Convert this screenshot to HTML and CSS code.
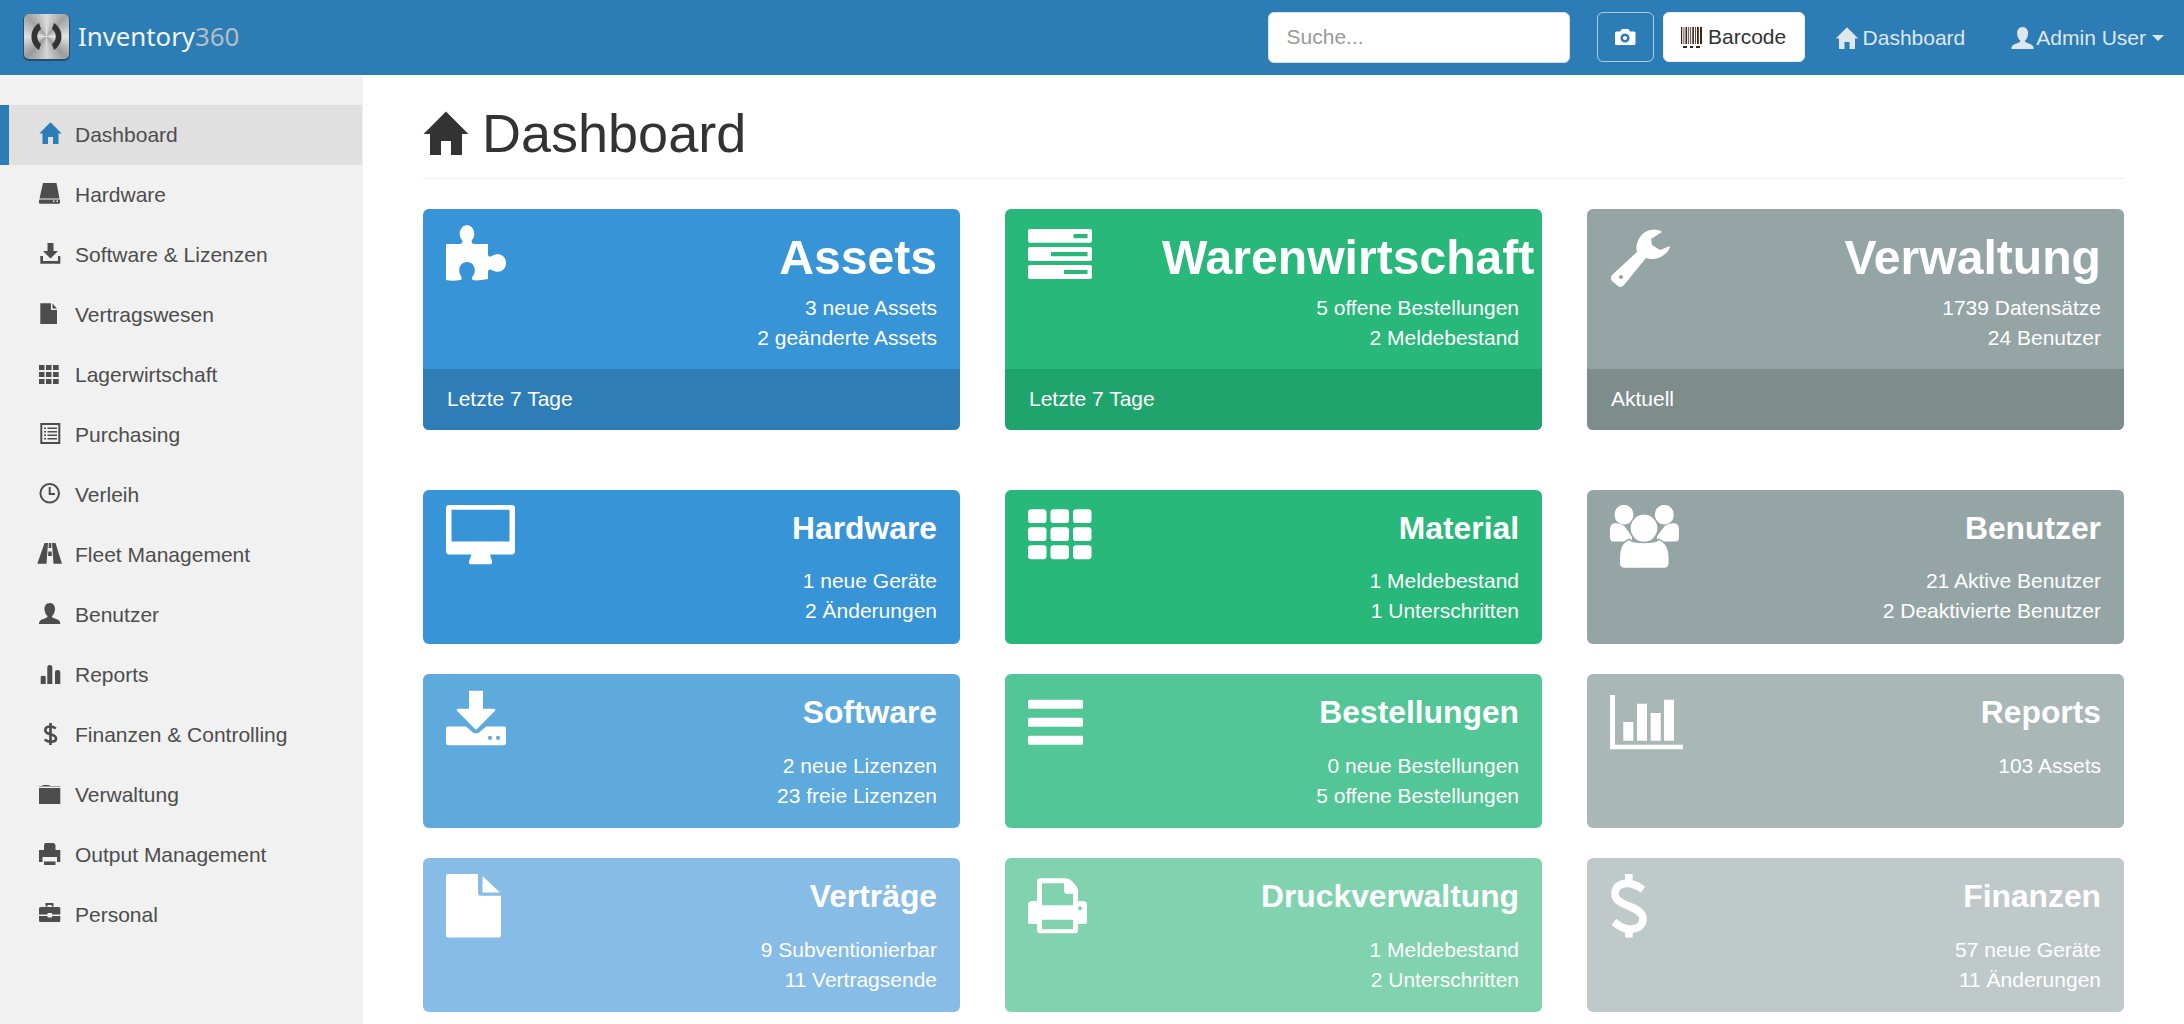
FILE: index.html
```html
<!DOCTYPE html>
<html lang="de">
<head>
<meta charset="utf-8">
<title>Inventory360 Dashboard</title>
<link rel="stylesheet" href="styles.css">
</head>
<body>
<header class="navbar">
  <a class="brand">
    <span class="logo"><svg viewBox="0 0 45 45" width="45" height="45"><path fill="#333" d="M15 9C5 15 5 30 15 36L17 30C12 27 12 18 17 15ZM30 9C40 15 40 30 30 36L28 30C33 27 33 18 28 15Z"/></svg></span>
    <span class="brand-text">Inventory<span class="brand-num">360</span></span>
  </a>
  <div class="nav-right">
    <input class="search" type="text" placeholder="Suche...">
    <button class="btn btn-cam"><svg viewBox="0 0 22 18" width="22" height="18"><path fill="#fff" fill-rule="evenodd" d="M1 5Q1 3.500 2.500 3.500H6L8 1H14.500L16 3.500H20Q21.500 3.500 21.500 5V15.500Q21.500 17 20 17H2.500Q1 17 1 15.500ZM11 5.500a4.500 4.500 0 1 0 .01 0ZM11 8a2 2 0 1 1-.01 0Z"/></svg></button>
    <button class="btn btn-bar"><svg viewBox="0 0 21 21" width="21" height="21"><path fill="#3a2418" d="M0 0h1.200v17H0zM2.500 0h.8v17h-.8zM4.500 0h1.600v17H4.500zM7.300 0h.8v17h-.8zM9.300 0h.8v17h-.8zM11.300 0h1.600v17h-1.600zM14 0h.8v17H14zM16 0h1.800v17H16zM19 0h2v17h-2zM2 19h4v2H2zM9 19h3v2H9zM15 19h4v2h-4z"/></svg><span>Barcode</span></button>
    <a class="nav-link nav-home"><svg viewBox="1 0 23 22" width="24" height="22"><path fill="currentColor" d="M12.500 .3L23.700 11.500H20.500V22H15V15H10V22H4.500V11.500H1.300Z"/></svg><span>Dashboard</span></a>
    <a class="nav-link nav-user"><svg viewBox="1 1 21.300 21" width="23" height="22"><path fill="currentColor" d="M11.700 1C15.500 1 17 4 17 7C17 10 15.500 13 14 14C14 15.500 15 16 17 16.500C20 17.500 22.300 18.500 22.300 22H1C1 18.500 3.500 17.500 6.500 16.500C8.500 16 9.500 15.500 9.500 14C8 13 6.500 10 6.500 7C6.500 4 8 1 11.700 1Z"/></svg><span>Admin User</span><i class="caret"></i></a>
  </div>
</header>
<div class="layout">
  <nav class="sidebar">
    <ul class="side-list">
      <li class="side-item active"><svg class="si" viewBox="0 0 26 26"><path d="M12.500 .3L23.700 11.500H20.500V22H15V15H10V22H4.500V11.500H1.300Z"/></svg>Dashboard</li>
      <li class="side-item"><svg class="si" viewBox="0 0 26 26"><path fill-rule="evenodd" d="M5 1H18.500L21.500 16.500H1.500ZM2 17.500H21.500Q22 17.500 22 18.500V20.700Q22 21.700 21 21.700H2Q1 21.700 1 20.700V18.500Q1 17.500 2 17.500ZM15 18.500v1.500h1.500v-1.500ZM18.500 18.500v1.500h1.500v-1.500Z"/></svg>Hardware</li>
      <li class="side-item"><svg class="si" viewBox="0 0 26 26"><path d="M9.500 1H15.500V9H20L12.500 16.500L5 9H9.500ZM2.300 14H5V19H20V14H22.300V21.700H2.300Z"/></svg>Software &amp; Lizenzen</li>
      <li class="side-item"><svg class="si" viewBox="0 0 26 26"><path d="M2.300 1.300H13V8H19V22H2.300ZM14.500 1.500L19 6.500H14.500Z"/></svg>Vertragswesen</li>
      <li class="side-item"><svg class="si" viewBox="0 0 26 26"><path d="M1 3h5.500v5H1zM8 3h5.500v5H8zM15 3h5.700v5H15zM1 10h5.500v5H1zM8 10h5.500v5H8zM15 10h5.700v5H15zM1 17h5.500v5H1zM8 17h5.500v5H8zM15 17h5.700v5H15z"/></svg>Lagerwirtschaft</li>
      <li class="side-item"><svg class="si" viewBox="0 0 26 26"><path fill-rule="evenodd" d="M2.300 1H22.300V22H2.300ZM4.300 3V20H20.300V3ZM6 5.500h2v1.500H6zM9.500 5.500H19v1.500H9.500zM6 9h2v1.500H6zM9.500 9H19v1.500H9.500zM6 12.500h2V14H6zM9.500 12.500H19V14H9.500zM6 16h2v1.500H6zM9.500 16H19v1.500H9.500z"/></svg>Purchasing</li>
      <li class="side-item"><svg class="si" viewBox="0 0 26 26"><circle cx="11.700" cy="11.300" r="9.300" fill="none" stroke="currentColor" stroke-width="2"/><path d="M11.700 5V12H17" fill="none" stroke="currentColor" stroke-width="2"/></svg>Verleih</li>
      <li class="side-item"><svg class="si" viewBox="0 0 26 26"><path d="M6.500 1H10L8.500 21.700H-.7ZM14 1H17.500L24 21.700H15.500ZM10.800 1H13.200L13.400 6H10.600ZM10.400 9.500H13.600L14 14H10Z"/></svg>Fleet Management</li>
      <li class="side-item"><svg class="si" viewBox="0 0 26 26"><path d="M11.700 1C15.500 1 17 4 17 7C17 10 15.500 13 14 14C14 15.500 15 16 17 16.500C20 17.500 22.300 18.500 22.300 22H1C1 18.500 3.500 17.500 6.500 16.500C8.500 16 9.500 15.500 9.500 14C8 13 6.500 10 6.500 7C6.500 4 8 1 11.700 1Z"/></svg>Benutzer</li>
      <li class="side-item"><svg class="si" viewBox="0 0 26 26"><path d="M2.700 15Q2.700 13.700 5.200 13.700Q7.700 13.700 7.700 15V22H2.700ZM9.300 5Q9.300 3 11.800 3Q14.300 3 14.300 5V22H9.300ZM17 10Q17 8 19.600 8Q22.300 8 22.300 10V22H17Z"/></svg>Reports</li>
      <li class="side-item"><svg class="si" viewBox="0 0 26 26"><path fill="none" stroke="currentColor" stroke-width="2.700" d="M17.800 6.500C16 5.200 14.500 4.500 12.500 4.500C9 4.500 7.300 6.200 7.300 8.200C7.300 10.700 9.500 11.500 12.500 12.300C15.800 13.200 18 14 18 16.500C18 18.800 15.800 19.800 12.800 19.800C10.500 19.800 8.500 19 6.700 17.500M12.500 1V23"/></svg>Finanzen &amp; Controlling</li>
      <li class="side-item"><svg class="si" viewBox="0 0 26 26"><path d="M1 6H22.300V22H1ZM1 4.500V4H4L5 3H11L12 4H22.300V4.500Z"/></svg>Verwaltung</li>
      <li class="side-item"><svg class="si" viewBox="0 0 26 26"><path d="M7 1H16L17.500 3V8H22.300V20H19V15H4.500V20H1V8H6V3ZM6 19.500H17.500V23H6Z"/></svg>Output Management</li>
      <li class="side-item"><svg class="si" viewBox="0 0 26 26"><path d="M7.500 1H15.500V4.500H13.500V3H9.500V4.500H7.500ZM2.500 5H21Q22.300 5 22.300 6.500V12.500H14V11H9.500V12.500H1V6.500Q1 5 2.500 5ZM1 14H9.500V15.500H14V14H22.300V18.500Q22.300 20 21 20H2.500Q1 20 1 18.500Z"/></svg>Personal</li>
    </ul>
  </nav>
  <main class="content">
    <div class="page-head">
      <svg class="head-icon" viewBox="1 0 23 22"><path d="M12.500 .3L23.700 11.500H20.500V22H15V15H10V22H4.500V11.500H1.300Z"/></svg>
      <h1 class="page-title">Dashboard</h1>
    </div>
    <section class="grid">
      <article class="card card-big blue1">
        <div class="card-main">
          <div class="icon-col"><svg class="gi" viewBox="0 0 80 80"><path d="M0 20H14C16 20 17 18 16 16C12 12 13 2 21 1C29 2 30 12 26 16C25 18 26 20 28 20H42V30C42 33 44 33 46 32C52 28 60 31 60 39C60 47 52 50 46 46C44 45 42 45 42 48V55C36 56 30 57 27 56C25 55 26 53 27 52C31 46 28 38 21 38C14 38 11 46 15 52C16 53 16 56 14 56C9 57 4 57 0 56Z"/></svg></div>
          <div class="text-col"><h2 class="card-title">Assets</h2><p class="card-line">3 neue Assets</p><p class="card-line">2 geänderte Assets</p></div>
        </div>
        <div class="card-foot">Letzte 7 Tage</div>
      </article>
      <article class="card card-big green1">
        <div class="card-main">
          <div class="icon-col"><svg class="gi" viewBox="0 0 80 80"><path fill-rule="evenodd" d="M2 5H62Q64 5 64 7V16.700Q64 18.700 62 18.700H2Q0 18.700 0 16.700V7Q0 5 2 5ZM45.500 10V14.300H59.500V10ZM2 23H62Q64 23 64 25V35Q64 37 62 37H2Q0 37 0 35V25Q0 23 2 23ZM23 28V32.300H59.500V28ZM2 41H62Q64 41 64 43V53Q64 55 62 55H2Q0 55 0 53V43Q0 41 2 41ZM36 46V50H59.500V46Z"/></svg></div>
          <div class="text-col"><h2 class="card-title">Warenwirtschaft</h2><p class="card-line">5 offene Bestellungen</p><p class="card-line">2 Meldebestand</p></div>
        </div>
        <div class="card-foot">Letzte 7 Tage</div>
      </article>
      <article class="card card-big gray1">
        <div class="card-main">
          <div class="icon-col"><svg class="gi" viewBox="0 0 80 80"><path fill-rule="evenodd" d="M52 8C45 3 35 6 30 13C26 19 26 24 27 28L2 51C0 54 1 56 3 58L8 62C10 64 12 63 14 61L36 34C42 36 50 35 55 30C58 28 60 24 60 22L50 26L42 21L41 15ZM11 51a2 2 0 1 1-.01 0Z"/></svg></div>
          <div class="text-col"><h2 class="card-title">Verwaltung</h2><p class="card-line">1739 Datensätze</p><p class="card-line">24 Benutzer</p></div>
        </div>
        <div class="card-foot">Aktuell</div>
      </article>

      <article class="card card-small blue1">
        <div class="card-main">
          <div class="icon-col"><svg class="gi" viewBox="0 0 80 80"><path fill-rule="evenodd" d="M3 0H66Q69 0 69 3V44.500Q69 47.500 66 47.500H44L46 54Q46.500 57 44 57H25Q22.500 57 23 54L25.500 47.500H3Q0 47.500 0 44.500V3Q0 0 3 0ZM5.500 4.500V35H63.500V4.500Z"/></svg></div>
          <div class="text-col"><h3 class="card-title">Hardware</h3><p class="card-line">1 neue Geräte</p><p class="card-line">2 Änderungen</p></div>
        </div>
      </article>
      <article class="card card-small green1">
        <div class="card-main">
          <div class="icon-col"><svg class="gi" viewBox="0 0 80 80"><rect x="0" y="4" width="18.500" height="13.300" rx="3"/><rect x="22.500" y="4" width="18.500" height="13.300" rx="3"/><rect x="45" y="4" width="18.500" height="13.300" rx="3"/><rect x="0" y="21.300" width="18.500" height="13.400" rx="3"/><rect x="22.500" y="21.300" width="18.500" height="13.400" rx="3"/><rect x="45" y="21.300" width="18.500" height="13.400" rx="3"/><rect x="0" y="38.700" width="18.500" height="13.300" rx="3"/><rect x="22.500" y="38.700" width="18.500" height="13.300" rx="3"/><rect x="45" y="38.700" width="18.500" height="13.300" rx="3"/></svg></div>
          <div class="text-col"><h3 class="card-title">Material</h3><p class="card-line">1 Meldebestand</p><p class="card-line">1 Unterschritten</p></div>
        </div>
      </article>
      <article class="card card-small gray1">
        <div class="card-main">
          <div class="icon-col"><svg class="gi" viewBox="0 0 80 80"><circle cx="14" cy="9.300" r="9.500"/><circle cx="54.300" cy="9.300" r="9.500"/><path d="M3 18C6 17 10 18 14 20L22 30V35H3Q0 35 0 31V24Q0 19 3 18ZM66 18C63 17 59 18 55 20L47 30V35H66Q69 35 69 31V24Q69 19 66 18Z"/><path class="gi-cut" d="M34 8.300a14 14 0 1 1-.01 0Z"/><path class="gi-cut" d="M19 33C24 37 44 37 49 33C56 36 59.300 41 59.300 52V56Q59.300 61 54 61H14.500Q9.300 61 9.300 56V52C9.300 41 12 36 19 33Z"/></svg></div>
          <div class="text-col"><h3 class="card-title">Benutzer</h3><p class="card-line">21 Aktive Benutzer</p><p class="card-line">2 Deaktivierte Benutzer</p></div>
        </div>
      </article>

      <article class="card card-small blue2">
        <div class="card-main">
          <div class="icon-col"><svg class="gi" viewBox="0 0 80 80"><path fill-rule="evenodd" d="M23 .7H37V18H48Q50 18 49 20L31 37.500Q30 38.500 29 37.500L11 20Q10 18 12 18H23ZM2 35H20L26 40C28 42 32 42 34 40L40 35H58Q60 35 60 37V51Q60 53 58 53H2Q0 53 0 51V37Q0 35 2 35ZM42 46a2 2 0 1 0 4 0a2 2 0 1 0-4 0ZM50 46a2 2 0 1 0 4 0a2 2 0 1 0-4 0Z"/></svg></div>
          <div class="text-col"><h3 class="card-title">Software</h3><p class="card-line">2 neue Lizenzen</p><p class="card-line">23 freie Lizenzen</p></div>
        </div>
      </article>
      <article class="card card-small green2">
        <div class="card-main">
          <div class="icon-col"><svg class="gi" viewBox="0 0 80 80"><rect x="0" y="9.300" width="55" height="8.700" rx="1.500"/><rect x="0" y="26.700" width="55" height="8.600" rx="1.500"/><rect x="0" y="44" width="55" height="8.700" rx="1.500"/></svg></div>
          <div class="text-col"><h3 class="card-title">Bestellungen</h3><p class="card-line">0 neue Bestellungen</p><p class="card-line">5 offene Bestellungen</p></div>
        </div>
      </article>
      <article class="card card-small gray2">
        <div class="card-main">
          <div class="icon-col"><svg class="gi" viewBox="0 0 80 80"><path d="M0 4.700H5V52.700H73V57H0ZM13.300 30.700H23.300V48.700H13.300ZM27 13.300H37V48.700H27ZM40.700 22H50.700V48.700H40.700ZM54 9.300H64V48.700H54Z"/></svg></div>
          <div class="text-col"><h3 class="card-title">Reports</h3><p class="card-line">103 Assets</p></div>
        </div>
      </article>

      <article class="card card-small blue3">
        <div class="card-main">
          <div class="icon-col"><svg class="gi" viewBox="0 0 80 80"><path d="M2 0H32V17Q32 21 35 21H55V59Q55 61 53 61H2Q0 61 0 59V2Q0 0 2 0ZM36.500 2L54 17.700H36.500Z"/></svg></div>
          <div class="text-col"><h3 class="card-title">Verträge</h3><p class="card-line">9 Subventionierbar</p><p class="card-line">11 Vertragsende</p></div>
        </div>
      </article>
      <article class="card card-small green3">
        <div class="card-main">
          <div class="icon-col"><svg class="gi" viewBox="0 0 80 80"><path fill-rule="evenodd" d="M12 4H37C40 4 42 5 44 7L47 10C49 12 50 14 50 17V26H55Q59 26 59 30V46Q59 48 57 48H50V54Q50 57 47 57H12Q9 57 9 54V48H2Q0 48 0 46V30Q0 26 4 26H9V7Q9 4 12 4ZM14 9V30H45V19H39Q36 19 36 16V9ZM14 44V53H45V44ZM50 33a2 2 0 1 0 4 0a2 2 0 1 0-4 0Z"/></svg></div>
          <div class="text-col"><h3 class="card-title">Druckverwaltung</h3><p class="card-line">1 Meldebestand</p><p class="card-line">2 Unterschritten</p></div>
        </div>
      </article>
      <article class="card card-small gray3">
        <div class="card-main">
          <div class="icon-col"><svg class="gi" viewBox="0 0 80 80"><path fill="none" stroke="#fff" stroke-width="7.500" d="M33 15C26 10 20 9 17 9C9 9 5 13 5 19C5 26 12 28 19 31C27 34 33 37 33 43C33 50 27 53 19 53C14 53 9 50 4 46"/><path d="M15 0H22.700V8H15ZM15 53H22.700V61H15Z"/></svg></div>
          <div class="text-col"><h3 class="card-title">Finanzen</h3><p class="card-line">57 neue Geräte</p><p class="card-line">11 Änderungen</p></div>
        </div>
      </article>
    </section>
  </main>
</div>
</body>
</html>
```

FILE: styles.css
```css
* { box-sizing: border-box; }
html, body { margin: 0; padding: 0; }
body {
  font-family: "Liberation Sans", Arial, sans-serif;
  font-size: 21px;
  color: #333;
  background: #fff;
}

/* navbar */
.navbar {
  height: 75px;
  background: #2c7db5;
  display: flex;
  align-items: center;
  padding: 0 20px 0 24px;
}
.brand { display: flex; align-items: center; gap: 9px; }
.logo {
  width: 45px;
  height: 45px;
  margin-top: -2px;
  border-radius: 5px;
  display: block;
  background: conic-gradient(#dcdcdc, #a2a2a2 12%, #e4e4e4 25%, #9c9c9c 38%, #d6d6d6 50%, #999 62%, #e0e0e0 75%, #a2a2a2 88%, #dcdcdc);
  box-shadow: 0 1px 0 1px #24506f;
}
.logo svg { display: block; }
.brand-text {
  font-family: "Noto Sans", sans-serif;
  font-size: 25.800px;
  color: #f2f5f7;
  margin-top: -3px;
}
.brand-num { color: #b4bdc2; }
.nav-right { margin-left: auto; display: flex; align-items: center; }
.search {
  width: 302px;
  height: 51px;
  margin-top: -1px;
  padding: 0 18px;
  border: 1px solid #ddd;
  border-radius: 6px;
  font: 21px "Liberation Sans", Arial, sans-serif;
  color: #555;
  background: #fff;
}
.search::placeholder { color: #999; opacity: 1; }
.btn {
  height: 50px;
  margin-top: -1px;
  border-radius: 6px;
  display: flex;
  align-items: center;
  justify-content: center;
  font: 21px "Liberation Sans", Arial, sans-serif;
  padding: 0;
}
.btn-cam {
  width: 57px;
  margin-left: 27px;
  background: transparent;
  border: 1px solid rgba(255, 255, 255, .6);
}
.btn-bar {
  width: 142px;
  margin-left: 9px;
  gap: 6px;
  background: #fff;
  color: #333;
  border: 1px solid #eee;
}
.nav-link { display: flex; align-items: center; color: #dfe6ec; }
.nav-home { margin-left: 30px; gap: 4px; }
.nav-user { margin-left: 46px; gap: 2px; }
.caret {
  width: 0;
  height: 0;
  margin-left: 4px;
  border-left: 6px solid transparent;
  border-right: 6px solid transparent;
  border-top: 6px solid #dfe6ec;
}

/* layout */
.layout { display: flex; min-height: calc(100vh - 75px); }
.sidebar {
  flex: 0 0 363px;
  background: #f1f1f1;
  padding-top: 30px;
}
.side-list { list-style: none; margin: 0; padding: 0; }
.side-item {
  height: 60px;
  display: flex;
  align-items: center;
  gap: 11px;
  padding-left: 38px;
  margin-right: 1px;
  color: #4d4d4d;
}
.si {
  width: 26px;
  height: 26px;
  flex: none;
  fill: #4d4d4d;
  color: #4d4d4d;
  overflow: visible;
}
.side-item.active {
  background: #e0e0e0;
  border-left: 9px solid #2c7db5;
  padding-left: 29px;
}
.side-item.active .si { fill: #2c7db5; }

/* content */
.content { flex: 1; min-width: 0; padding: 0 60px; }
.page-head {
  height: 104px;
  margin-bottom: 30px;
  border-bottom: 1px solid #eee;
  display: flex;
  align-items: flex-start;
  gap: 13px;
}
.head-icon {
  width: 46px;
  height: 44px;
  margin-top: 36px;
  fill: #333;
  flex: none;
}
.page-title {
  margin: 29px 0 0;
  font-size: 54px;
  line-height: 59px;
  font-weight: 400;
  color: #333;
}
.grid {
  display: grid;
  grid-template-columns: repeat(3, 1fr);
  column-gap: 45px;
  row-gap: 30.400px;
}
.card {
  border-radius: 6px;
  color: #fff;
  display: flex;
  flex-direction: column;
  overflow: hidden;
}
.card-big { height: 221px; margin-bottom: 29.600px; }
.card-small { height: 153.800px; }
.card-main { flex: 1; display: flex; padding: 15px 23px; }
.card-small .card-main { padding-top: 15.500px; }
.icon-col { flex: 0 0 134px; }
.gi { width: 80px; height: 80px; display: block; fill: #fff; }
.card-small .gi { transform: scaleY(1.041); transform-origin: top left; }
.gi-cut { stroke: #95a5a5; stroke-width: 1.500px; }
.text-col { flex: 1; min-width: 0; text-align: right; white-space: nowrap; }
.card-title { margin: 0; font-weight: 700; }
.card-big .card-title { font-size: 48.100px; line-height: 52px; padding-top: 6.500px; margin-bottom: 10.500px; }
.card-small .card-title { font-size: 31.800px; line-height: 35px; padding-top: 5.500px; margin-bottom: 20.500px; }
.card-line { margin: 0; line-height: 30px; }
.card-foot { height: 61px; padding: 0 0 2px 24px; display: flex; align-items: center; }
.blue1 { background: #3794d7; }
.blue1 .card-foot { background: #2e7db6; }
.blue2 { background: #5eaadd; }
.blue3 { background: #87bce6; }
.green1 { background: #28b87a; }
.green1 .card-foot { background: #1ea46c; }
.green2 { background: #52c696; }
.green3 { background: #80d3ae; }
.gray1 { background: #95a5a5; }
.gray1 .card-foot { background: #7f8c8c; }
.gray2 { background: #a9b7b7; }
.gray3 { background: #bfc9ca; }
```
